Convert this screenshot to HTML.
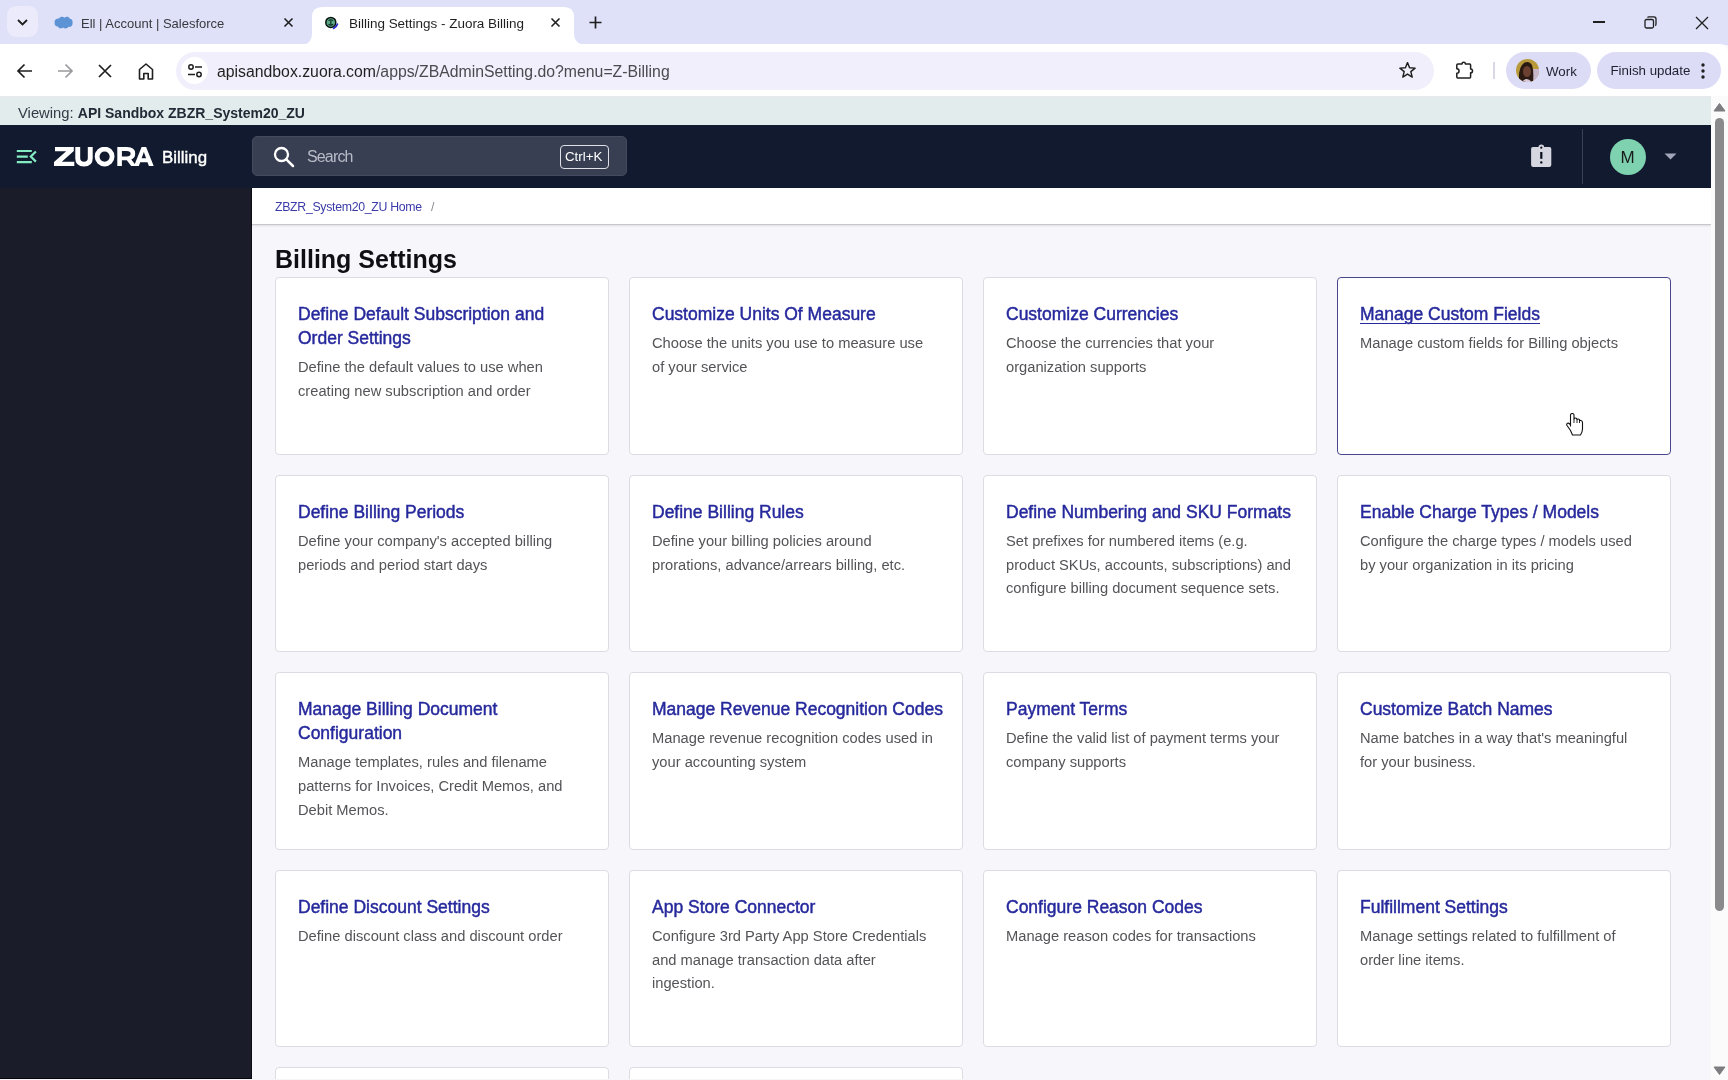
<!DOCTYPE html>
<html><head><meta charset="utf-8">
<style>
*{margin:0;padding:0;box-sizing:border-box}
html,body{width:1728px;height:1080px;overflow:hidden;background:#f7f6fb;font-family:"Liberation Sans",sans-serif}
.a{position:absolute}
#tabs{left:0;top:0;width:1728px;height:45px;background:#dfe1f9}
#toolbar{left:0;top:44px;width:1728px;height:52px;background:#fff;border-top-right-radius:8px}
#viewbar{left:0;top:96px;width:1711px;height:29px;background:#e2eced;border-top:1px solid #e6e8ea}
#zhead{left:0;top:125px;width:1711px;height:63px;background:#111a2e}
#side{left:0;top:188px;width:252px;height:892px;background:#1b1c29}
#main{left:252px;top:188px;width:1459px;height:892px;background:#f7f6fb}
#crumb{left:252px;top:188px;width:1459px;height:37px;background:#fff;border-bottom:1px solid #c6c6cc;box-shadow:0 1px 2px rgba(0,0,0,.10)}
#sb{left:1711px;top:96px;width:17px;height:984px;background:#fbfbfc}
.card{position:absolute;width:334px;background:#fff;border:1px solid #dddce3;border-radius:4px;padding:23.8px 22px 0 22px}
.card.hov{border-color:#46468c}
.card h3{font-size:17.5px;line-height:24.6px;font-weight:normal;-webkit-text-stroke:0.45px #26299c;color:#26299c;white-space:nowrap}
.card.hov h3{text-decoration:underline;text-underline-offset:3px;text-decoration-thickness:1px}
.card p{margin-top:5.5px;font-size:14.7px;line-height:23.7px;color:#545458;white-space:nowrap}
.t{position:absolute;white-space:nowrap}
body{will-change:transform}
</style></head>
<body>
<div id="tabs" class="a"></div>
<!-- tab search button -->
<div class="a" style="left:7px;top:6px;width:31px;height:31px;border-radius:9px;background:#ecebfb"></div>
<svg class="a" style="left:15px;top:15px" width="15" height="15" viewBox="0 0 15 15"><path d="M3 5 L7.5 9.5 L12 5" fill="none" stroke="#1f1f1f" stroke-width="1.8"/></svg>
<!-- inactive tab -->
<svg class="a" style="left:54px;top:16px" width="19" height="13" viewBox="0 0 19 13"><path d="M5 2.5 C6 0.5 9 0 10.5 1.8 C12 0.3 15 0.6 15.8 2.8 C18 2.8 19 5 18.5 7 C19 9.5 16.5 11.5 14.5 10.8 C13.5 12.8 10.5 13 9.2 11.5 C7.5 13 4.5 12.5 4 10.5 C1.5 10.8 0 8.5 0.8 6.5 C-0.2 4.5 2 2.2 5 2.5Z" fill="#5b93d5"/></svg>
<div class="t" style="left:81px;top:16px;font-size:13px;color:#38383d">Ell | Account | Salesforce</div>
<svg class="a" style="left:283px;top:17px" width="11" height="11" viewBox="0 0 11 11"><path d="M1.5 1.5 L9.5 9.5 M9.5 1.5 L1.5 9.5" stroke="#1f1f1f" stroke-width="1.6"/></svg>
<!-- active tab -->
<svg class="a" style="left:300px;top:7px" width="287" height="38" viewBox="0 0 287 38"><path d="M0 38 Q12 38 12 26 L12 10 Q12 0 22 0 L264 0 Q274 0 274 10 L274 26 Q274 38 287 38 Z" fill="#fff"/></svg>
<svg class="a" style="left:324px;top:15px" width="18" height="16" viewBox="0 0 18 16"><circle cx="6.8" cy="7.4" r="5" fill="#5aa886" stroke="#0a1410" stroke-width="1.5"/><path d="M4.6 5.6 Q6.8 3.8 9 5.6 M4.6 9.2 Q6.8 11 9 9.2 M6.8 5.5 V9.3" stroke="#0d2a20" stroke-width="1.1" fill="none"/><path d="M9.6 13.3 Q12.3 12.3 13.4 9.2" stroke="#2a2ad0" stroke-width="1.8" fill="none" stroke-linecap="round"/></svg>
<div class="t" style="left:349px;top:16px;font-size:13.46px;color:#1f1f1f">Billing Settings - Zuora Billing</div>
<svg class="a" style="left:550px;top:17px" width="11" height="11" viewBox="0 0 11 11"><path d="M1.5 1.5 L9.5 9.5 M9.5 1.5 L1.5 9.5" stroke="#1f1f1f" stroke-width="1.6"/></svg>
<svg class="a" style="left:588px;top:15px" width="15" height="15" viewBox="0 0 15 15"><path d="M7.5 1.5 V13.5 M1.5 7.5 H13.5" stroke="#1f1f1f" stroke-width="1.7"/></svg>
<!-- window controls -->
<div class="a" style="left:1593px;top:21px;width:12px;height:1.5px;background:#1f1f1f"></div>
<svg class="a" style="left:1643px;top:15px" width="15" height="15" viewBox="0 0 15 15"><rect x="2" y="4.5" width="8.5" height="8.5" rx="1.5" fill="none" stroke="#1f1f1f" stroke-width="1.3"/><path d="M4.5 2.5 Q4.8 1.8 6 1.8 L11 1.8 Q13 1.8 13 4 L13 9 Q13 10.3 12.2 10.6" fill="none" stroke="#1f1f1f" stroke-width="1.3"/></svg>
<svg class="a" style="left:1695px;top:16px" width="14" height="14" viewBox="0 0 14 14"><path d="M1 1 L13 13 M13 1 L1 13" stroke="#1f1f1f" stroke-width="1.3"/></svg>

<div id="toolbar" class="a"></div>
<!-- nav icons -->
<svg class="a" style="left:15px;top:61px" width="20" height="20" viewBox="0 0 20 20"><path d="M17 10 H3.5 M9.5 3.5 L3 10 L9.5 16.5" fill="none" stroke="#1f1f1f" stroke-width="1.7"/></svg>
<svg class="a" style="left:55px;top:61px" width="20" height="20" viewBox="0 0 20 20"><path d="M3 10 H16.5 M10.5 3.5 L17 10 L10.5 16.5" fill="none" stroke="#9a9a9e" stroke-width="1.7"/></svg>
<svg class="a" style="left:96px;top:62px" width="18" height="18" viewBox="0 0 18 18"><path d="M3 3 L15 15 M15 3 L3 15" stroke="#1f1f1f" stroke-width="1.7"/></svg>
<svg class="a" style="left:136px;top:61px" width="20" height="20" viewBox="0 0 20 20"><path d="M3.5 18 V8.5 L10 3 L16.5 8.5 V18 H12.2 V12.5 H7.8 V18 Z" fill="none" stroke="#1f1f1f" stroke-width="1.6" stroke-linejoin="round"/></svg>
<!-- omnibox -->
<div class="a" style="left:176px;top:52px;width:1258px;height:38px;border-radius:19px;background:#f1effb"></div>
<div class="a" style="left:181px;top:57px;width:27px;height:27px;border-radius:14px;background:#fff"></div>
<svg class="a" style="left:186px;top:62px" width="18" height="18" viewBox="0 0 18 18"><circle cx="5" cy="5" r="2.2" fill="none" stroke="#1f1f1f" stroke-width="1.5"/><path d="M9 5 H16 M2 12.5 H9" stroke="#1f1f1f" stroke-width="1.5"/><circle cx="13" cy="12.5" r="2.2" fill="none" stroke="#1f1f1f" stroke-width="1.5"/></svg>
<div class="t" style="left:217px;top:62.5px;font-size:15.8px;color:#1f1f1f">apisandbox.zuora.com<span style="color:#4a4a4f">/apps/ZBAdminSetting.do?menu=Z-Billing</span></div>
<svg class="a" style="left:1399px;top:62px" width="17" height="17" viewBox="0 0 17 17"><path d="M8.50 0.60 L10.56 5.77 L16.11 6.13 L11.83 9.68 L13.20 15.07 L8.50 12.10 L3.80 15.07 L5.17 9.68 L0.89 6.13 L6.44 5.77Z" fill="none" stroke="#1f1f1f" stroke-width="1.45" stroke-linejoin="round"/></svg>
<svg class="a" style="left:1450px;top:55px" width="30" height="30" viewBox="0 0 30 30"><path d="M8 9 H12 A1.7 1.7 0 0 1 15.4 9 H19.6 Q20.6 9 20.6 10 V14 A1.9 1.9 0 0 1 20.6 17.8 V22 Q20.6 23 19.6 23 H7.8 Q6.8 23 6.8 22 V18.3 A2.2 2.2 0 0 0 6.8 13.8 V10 Q6.8 9 8 9 Z" fill="none" stroke="#1f1f1f" stroke-width="1.5" stroke-linejoin="round"/></svg>
<div class="a" style="left:1493px;top:62px;width:1.5px;height:17px;background:#d9d8e6"></div>
<div class="a" style="left:1506px;top:52px;width:85px;height:37px;border-radius:19px;background:#dcdcf7"></div>
<svg class="a" style="left:1516px;top:59px" width="23" height="23" viewBox="0 0 23 23"><defs><clipPath id="avc"><circle cx="11.5" cy="11.5" r="11.5"/></clipPath></defs><g clip-path="url(#avc)"><rect width="23" height="23" fill="#b89a3a"/><rect x="14" y="10" width="9" height="13" fill="#c9b6c8"/><path d="M3 23 Q2 8 8 4 Q13 1 16 6 Q18 12 17 23Z" fill="#2a1a12"/><ellipse cx="11" cy="12.5" rx="4" ry="5.5" fill="#6b4030"/><path d="M6 23 Q10 17 16 23Z" fill="#d8c8d8"/></g></svg>
<div class="t" style="left:1546px;top:63.5px;font-size:13.3px;color:#1f1f2f">Work</div>
<div class="a" style="left:1597px;top:52px;width:124px;height:37px;border-radius:19px;background:#dcdcf7"></div>
<div class="t" style="left:1610.5px;top:63px;font-size:13.3px;color:#1f1f2f">Finish update</div>
<svg class="a" style="left:1699px;top:62px" width="8" height="18" viewBox="0 0 8 18"><circle cx="4" cy="3" r="1.7" fill="#1f1f1f"/><circle cx="4" cy="9" r="1.7" fill="#1f1f1f"/><circle cx="4" cy="15" r="1.7" fill="#1f1f1f"/></svg>

<div id="viewbar" class="a"></div>
<div class="t" style="left:18px;top:104.5px;font-size:14.8px;color:#333a45">Viewing: <b style="font-size:14px;color:#222a36">API Sandbox ZBZR_System20_ZU</b></div>

<div id="zhead" class="a"></div>
<svg class="a" style="left:16px;top:149px" width="23" height="16" viewBox="0 0 23 16"><path d="M0.8 2 H15.8 M0.8 7.6 H11.8 M0.8 13.2 H15.8 M19.9 2.4 L14.8 7.6 L19.9 12.6" fill="none" stroke="#84ecc2" stroke-width="2.2"/></svg>
<svg class="a" style="left:54px;top:147px" width="100" height="20" viewBox="0 0 100 20"><g fill="#fff" fill-rule="evenodd"><path d="M1 0 H19.8 V4 L7.8 14.8 H20.3 V19 H0 V15 L12.2 4.2 H1 Z"/><path d="M21.3 0 H26.2 V11 Q26.2 14.8 30 14.8 Q33.8 14.8 33.8 11 V0 H38.7 V11.5 Q38.7 19.4 30 19.4 Q21.3 19.4 21.3 11.5 Z"/><path d="M50.6 -0.3 A9.9 9.9 0 1 1 50.6 19.5 A9.9 9.9 0 1 1 50.6 -0.3 Z M50.6 4.5 A5.1 5.1 0 1 0 50.6 14.7 A5.1 5.1 0 1 0 50.6 4.5 Z"/><path d="M63.3 0 H73 Q81.2 0 81.2 6.6 Q81.2 11 77.3 12.6 L82.3 19 H77.2 L72.8 13.2 H67.9 V19 H63.3 Z M67.9 4 V9.4 H72.6 Q76.6 9.4 76.6 6.7 Q76.6 4 72.6 4 Z"/><path d="M80 19 L87.6 0 H92.1 L99.7 19 H94.9 L93.5 15.2 H86.2 L84.8 19 Z M87.6 11.3 H92.1 L89.85 5 Z"/></g></svg>
<div class="t" style="left:162px;top:147.5px;font-size:16.9px;-webkit-text-stroke:0.4px #fff;color:#fff">Billing</div>
<div class="a" style="left:252px;top:136px;width:375px;height:40px;border-radius:5px;background:#393f52;border:1px solid #454b5e"></div>
<svg class="a" style="left:273px;top:146px" width="22" height="22" viewBox="0 0 22 22"><circle cx="8.5" cy="8.5" r="6.5" fill="none" stroke="#fff" stroke-width="2.3"/><path d="M13.3 13.3 L20 20" stroke="#fff" stroke-width="2.5" stroke-linecap="round"/></svg>
<div class="t" style="left:307px;top:148px;font-size:16px;letter-spacing:-0.85px;color:#b9bcc8">Search</div>
<div class="a" style="left:560px;top:145px;width:48.5px;height:23.5px;border-radius:4px;border:1.8px solid #dfe1e8"></div>
<div class="t" style="left:565px;top:149px;font-size:13.3px;color:#fff">Ctrl+K</div>
<svg class="a" style="left:1530px;top:143px" width="23" height="25" viewBox="0 0 23 25"><rect x="1.1" y="3.9" width="20.2" height="20" rx="1.8" fill="#d6d6e0"/><circle cx="11.3" cy="4.3" r="2.8" fill="#d6d6e0"/><circle cx="11.3" cy="4.7" r="1.1" fill="#0a0f1c"/><rect x="10.2" y="9" width="2.2" height="6.8" fill="#0a0f1c"/><circle cx="11.3" cy="19.4" r="1.2" fill="#0a0f1c"/></svg>
<div class="a" style="left:1582px;top:129px;width:1px;height:55px;background:#3a4154"></div>
<div class="a" style="left:1610px;top:138.5px;width:36px;height:36px;border-radius:18px;background:#7fd2b0"></div>
<div class="t" style="left:1620.5px;top:148px;font-size:17px;color:#1a1a1a">M</div>
<svg class="a" style="left:1664px;top:153px" width="13" height="7" viewBox="0 0 13 7"><path d="M0.5 0.5 H12.5 L6.5 6.5Z" fill="#a2a6ba"/></svg>

<div id="side" class="a"></div>
<div id="main" class="a"></div>
<div id="crumb" class="a"></div>
<div class="t" style="left:275px;top:199.5px;font-size:12.3px;letter-spacing:-0.3px;color:#3a3aa8">ZBZR_System20_ZU Home</div>
<div class="t" style="left:431px;top:199.5px;font-size:12.3px;color:#8a8a95">/</div>
<div class="t" style="left:275px;top:245px;font-size:25px;font-weight:bold;color:#0f0f14">Billing Settings</div>
<div class="card" style="left:275px;top:277px;height:178px"><h3>Define Default Subscription and<br>Order Settings</h3><p>Define the default values to use when<br>creating new subscription and order</p></div>
<div class="card" style="left:629px;top:277px;height:178px"><h3>Customize Units Of Measure</h3><p>Choose the units you use to measure use<br>of your service</p></div>
<div class="card" style="left:983px;top:277px;height:178px"><h3>Customize Currencies</h3><p>Choose the currencies that your<br>organization supports</p></div>
<div class="card hov" style="left:1337px;top:277px;height:178px"><h3>Manage Custom Fields</h3><p>Manage custom fields for Billing objects</p></div>
<div class="card" style="left:275px;top:475px;height:177px"><h3>Define Billing Periods</h3><p>Define your company's accepted billing<br>periods and period start days</p></div>
<div class="card" style="left:629px;top:475px;height:177px"><h3>Define Billing Rules</h3><p>Define your billing policies around<br>prorations, advance/arrears billing, etc.</p></div>
<div class="card" style="left:983px;top:475px;height:177px"><h3>Define Numbering and SKU Formats</h3><p>Set prefixes for numbered items (e.g.<br>product SKUs, accounts, subscriptions) and<br>configure billing document sequence sets.</p></div>
<div class="card" style="left:1337px;top:475px;height:177px"><h3>Enable Charge Types / Models</h3><p>Configure the charge types / models used<br>by your organization in its pricing</p></div>
<div class="card" style="left:275px;top:672px;height:178px"><h3>Manage Billing Document<br>Configuration</h3><p>Manage templates, rules and filename<br>patterns for Invoices, Credit Memos, and<br>Debit Memos.</p></div>
<div class="card" style="left:629px;top:672px;height:178px"><h3>Manage Revenue Recognition Codes</h3><p>Manage revenue recognition codes used in<br>your accounting system</p></div>
<div class="card" style="left:983px;top:672px;height:178px"><h3>Payment Terms</h3><p>Define the valid list of payment terms your<br>company supports</p></div>
<div class="card" style="left:1337px;top:672px;height:178px"><h3>Customize Batch Names</h3><p>Name batches in a way that's meaningful<br>for your business.</p></div>
<div class="card" style="left:275px;top:870px;height:177px"><h3>Define Discount Settings</h3><p>Define discount class and discount order</p></div>
<div class="card" style="left:629px;top:870px;height:177px"><h3>App Store Connector</h3><p>Configure 3rd Party App Store Credentials<br>and manage transaction data after<br>ingestion.</p></div>
<div class="card" style="left:983px;top:870px;height:177px"><h3>Configure Reason Codes</h3><p>Manage reason codes for transactions</p></div>
<div class="card" style="left:1337px;top:870px;height:177px"><h3>Fulfillment Settings</h3><p>Manage settings related to fulfillment of<br>order line items.</p></div>
<div class="card" style="left:275px;top:1067px;height:178px"><h3></h3><p></p></div>
<div class="card" style="left:629px;top:1067px;height:178px"><h3></h3><p></p></div><div class="a" style="left:251px;top:188px;width:1px;height:890px;background:#0d0d16"></div>
<div class="a" style="left:0;top:1078px;width:252px;height:1px;background:#06060c"></div>
<div class="a" style="left:0;top:1079px;width:1711px;height:1px;background:#f6f6f9"></div>
<div id="sb" class="a"></div>
<svg class="a" style="left:1713px;top:102px" width="13" height="10" viewBox="0 0 13 10"><path d="M1 9 L6.5 1.5 L12 9Z" fill="#7d7c80" stroke="#7d7c80" stroke-linejoin="round"/></svg>
<div class="a" style="left:1715px;top:118px;width:9px;height:793px;border-radius:5px;background:#8a898c"></div>
<svg class="a" style="left:1713px;top:1066px" width="13" height="10" viewBox="0 0 13 10"><path d="M1 1 L12 1 L6.5 8.5Z" fill="#7d7c80" stroke="#7d7c80" stroke-linejoin="round"/></svg>
<!-- cursor -->
<svg class="a" style="left:1565.5px;top:412.5px" width="18" height="24" viewBox="0 0 18 24"><path d="M4.5 13 V2 Q4.5 0.5 6.2 0.5 Q8 0.5 8 2 V6 Q8 5 9.5 5 Q11 5 11 6.5 Q11 6 12.3 6 Q13.5 6 13.5 7.5 Q13.7 7.3 15 7.5 Q16.5 8 16.5 9.5 V16 Q16.5 18.5 14.5 22 H6.5 L4.5 17.5 L1 12.5 Q0.2 11 1.5 10.3 Q3 9.5 4.5 12 Z" fill="#fff" stroke="#111" stroke-width="1.1" stroke-linejoin="round"/><path d="M8 6 V10 M11 6.5 V10 M13.5 7.5 V10" stroke="#111" stroke-width="0.9"/></svg>
</body></html>
